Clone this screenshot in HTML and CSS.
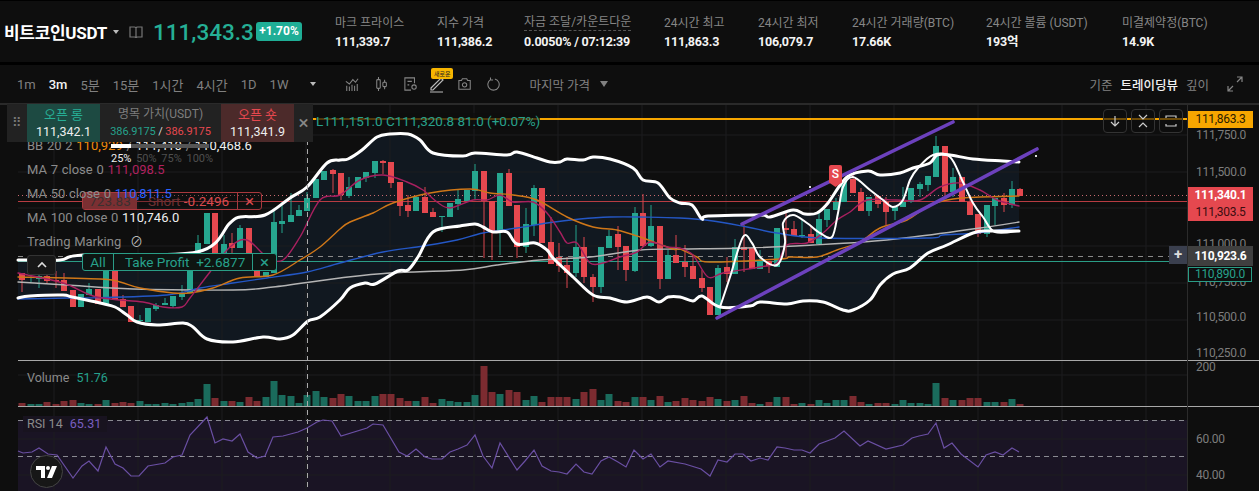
FILE: index.html
```html
<!DOCTYPE html>
<html lang="ko">
<head>
<meta charset="utf-8">
<title>비트코인USDT</title>
<link rel="stylesheet" href="styles.css">
</head>
<body>
<header class="topbar">
  <div class="symbol">
    <span class="symbol-name">비트코인USDT</span>
    <span class="caret"></span>
    <svg class="book" width="14" height="14" viewBox="0 0 14 14"><path d="M1 2h4.500c.8 0 1.500.4 1.500 1 0-.6.7-1 1.500-1H13v10H8.500c-.8 0-1.500.4-1.500 1 0-.6-.7-1-1.500-1H1zM7 3v10" fill="none" stroke="#777" stroke-width="1.200"/></svg>
    <span class="last-price">111,343.3</span>
    <span class="change">+1.70%</span>
  </div>
  <div class="stats">
    <div class="stat"><span class="stat-label">마크 프라이스</span><b class="stat-value">111,339.7</b></div>
    <div class="stat"><span class="stat-label">지수 가격</span><b class="stat-value">111,386.2</b></div>
    <div class="stat"><span class="stat-label stat-dashed">자금 조달/카운트다운</span><b class="stat-value">0.0050% / 07:12:39</b></div>
    <div class="stat"><span class="stat-label">24시간 최고</span><b class="stat-value">111,863.3</b></div>
    <div class="stat"><span class="stat-label">24시간 최저</span><b class="stat-value">106,079.7</b></div>
    <div class="stat"><span class="stat-label">24시간 거래량(BTC)</span><b class="stat-value">17.66K</b></div>
    <div class="stat"><span class="stat-label">24시간 볼륨 (USDT)</span><b class="stat-value">193억</b></div>
    <div class="stat"><span class="stat-label">미결제약정(BTC)</span><b class="stat-value">14.9K</b></div>
  </div>
</header>

<nav class="toolbar">
  <div class="intervals">
    <span>1m</span><span class="active">3m</span><span>5분</span><span>15분</span><span>1시간</span><span>4시간</span><span>1D</span><span>1W</span>
    <span class="caret caret-dim"></span>
  </div>
  <div class="tools">
    <svg width="16" height="18" viewBox="0 0 16 18" fill="none" stroke="#858585" stroke-width="1.200"><path d="M1 6l4 3 4-5 3 3 3-4"/><path d="M2 17v-6M5 17v-5M8 17v-7M11 17v-6M14 17V9"/></svg>
    <svg width="15" height="18" viewBox="0 0 15 18" fill="none" stroke="#858585" stroke-width="1.200"><path d="M4 1v3M4 14v3M11 4v3M11 12v3"/><rect x="2" y="4" width="4" height="10" rx="1"/><rect x="9" y="7" width="4" height="5" rx="1"/></svg>
    <svg width="15" height="18" viewBox="0 0 15 18" fill="none" stroke="#858585" stroke-width="1.200"><path d="M12 8V2H1v14h7"/><path d="M4 6h5M4 10h2"/><circle cx="11.500" cy="12.500" r="2.500"/></svg>
    <span class="draw-tool">
      <span class="new-badge">새로운</span>
      <svg width="16" height="18" viewBox="0 0 16 18" fill="none" stroke="#bbb" stroke-width="1.200"><path d="M2 13L12 3l2 2L4 15H2zM1 17h13"/></svg>
    </span>
    <svg width="15" height="16" viewBox="0 0 15 16" fill="none" stroke="#858585" stroke-width="1.200"><path d="M1 4h3l1-2h5l1 2h3v10H1z"/><circle cx="7.500" cy="9" r="2.500"/></svg>
    <svg width="15" height="16" viewBox="0 0 15 16" fill="none" stroke="#858585" stroke-width="1.200"><path d="M4 3a6.500 6.500 0 1 0 5-.8M4 .5V3.500h3"/></svg>
    <span class="price-type">마지막 가격</span><span class="caret caret-big"></span>
  </div>
  <div class="views">
    <span>기준</span><span class="active">트레이딩뷰</span><span>깊이</span>
    <svg width="16" height="16" viewBox="0 0 16 16" fill="none" stroke="#858585" stroke-width="1.200"><path d="M10 1h5v5M15 1l-5 5M1 10v5h5M1 15l5-5"/></svg>
  </div>
</nav>

<main class="chart">
  <svg id="plot" class="plot" width="1259" height="387" viewBox="0 104 1259 387"></svg>

  <div class="tag tag-short">
    <span class="tag-size">723.83</span><span class="tag-text"><i>Short</i> -0.2496</span><span class="tag-x">×</span>
  </div>
  <div class="tag tag-profit">
    <span class="tag-all">All</span><span class="tag-text">Take Profit &nbsp;+2.6877</span><span class="tag-x">×</span>
  </div>

  <div class="legend">
    <div class="legend-row">BB 20 2 <span class="c-orange">110,929</span> / <span class="c-white">111,410</span> / <span class="c-white">110,468.6</span></div>
    <div class="legend-row">MA 7 close 0 <span class="c-pink">111,098.5</span></div>
    <div class="legend-row">MA 50 close 0 <span class="c-blue">110,811.5</span></div>
    <div class="legend-row">MA 100 close 0 <span class="c-white">110,746.0</span></div>
    <div class="legend-row">Trading Marking <span class="no-sign">⊘</span></div>
  </div>

  <div class="order-panel">
    <span class="grip">⠿</span>
    <div class="order-side side-long"><span class="side-title">오픈 롱</span><span>111,342.1</span></div>
    <div class="order-mid"><span class="mid-title">명목 가치(USDT)</span><span class="mid-values"><i class="c-green">386.9175</i> / <i class="c-red">386.9175</i></span></div>
    <div class="order-side side-short"><span class="side-title">오픈 숏</span><span>111,341.9</span></div>
    <span class="panel-close">×</span>
  </div>
  <div class="qty-slider"><span class="qty-track"><span class="qty-fill"></span></span>
    <span class="qty-labels"><b>25%</b> 50% 75% 100%</span></div>
  <div class="ohlc">L111,151.0 C111,320.8 81.0 (+0.07%)</div>

  <div class="collapse-btn"><svg width="12" height="8" viewBox="0 0 12 8" fill="none" stroke="#ddd" stroke-width="1.600"><path d="M2 6l4-4 4 4"/></svg></div>

  <div class="chart-tools">
    <span class="chart-tool"><svg width="12" height="14" viewBox="0 0 12 14" fill="none" stroke="#ccc" stroke-width="1.200"><path d="M6 2v10M2 8l4 4 4-4"/></svg></span>
    <span class="chart-tool"><svg width="12" height="14" viewBox="0 0 12 14" fill="none" stroke="#ccc" stroke-width="1.200"><path d="M2 1l4 4 4-4M2 13l4-4 4 4"/></svg></span>
    <span class="chart-tool"><svg width="12" height="14" viewBox="0 0 12 14" fill="none" stroke="#ccc" stroke-width="1.200"><path d="M1 4V2h10v2M1 10v2h10v-2"/></svg></span>
  </div>

  <div class="s-flag">S</div>

  <div class="axis-tag tag-high">111,863.3</div>
  <div class="axis-tag tag-red"><b>111,340.1</b><span>111,303.5</span></div>
  <div class="axis-tag tag-cross"><b>110,923.6</b></div>
  <div class="cross-plus">+</div>
  <div class="axis-tag tag-green">110,890.0</div>

  <div class="pane-label pane-volume">Volume <span class="c-green pane-value">51.76</span></div>
  <div class="pane-label pane-rsi">RSI 14 <span class="c-purple pane-value">65.31</span></div>

  <div class="tv-logo"><svg width="22" height="12" viewBox="0 0 22 12" fill="#fff"><path d="M0 0h9v12H5V4H0z"/><circle cx="12" cy="2" r="2"/><path d="M16 0h5l-5 12h-5z"/></svg></div>
</main>
<script src="chart.js"></script>
</body>
</html>
```
FILE: styles.css
```css
* { box-sizing: border-box; }
html, body { margin: 0; height: 491px; overflow: hidden; }
body {
  background: #000;
  color: #e8e8e8;
  font-family: Roboto, "Noto Sans CJK KR", sans-serif;
}
i { font-style: normal; }

.topbar {
  height: 61px;
  margin-top: 1px;
  margin-bottom: 3px;
  background: #0e0e0e;
  display: flex;
  align-items: center;
  padding-left: 4px;
}
.symbol { width: 331px; display: flex; align-items: center; }
.symbol-name { font-size: 17px; font-weight: 700; color: #fff; letter-spacing: -0.3px; width: 109px; }
.caret {
  display: inline-block;
  border-left: 3.5px solid transparent;
  border-right: 3.5px solid transparent;
  border-top: 4px solid #bbb;
}
.book { margin-left: 10px; }
.last-price { margin-left: 10px; font-size: 22.500px; font-weight: 500; color: #25b096; width: 103px; white-space: nowrap; }
.change {
  background: #1fae96;
  color: #fff;
  border-radius: 3px;
  font-size: 12px;
  font-weight: 700;
  height: 19px;
  line-height: 19px;
  width: 46px;
  text-align: center;
}
.stats {
  display: grid;
  grid-template-columns: 102px 87px 140px 94px 94px 134px 136px auto;
}
.stat { display: flex; flex-direction: column; gap: 3px; }
.stat-label { font-size: 12px; line-height: 16px; color: #868686; white-space: nowrap; }
.stat-dashed { border-bottom: 1px dashed #555; line-height: 15px; align-self: flex-start; }
.stat-value { font-size: 12.500px; letter-spacing: -0.2px; line-height: 15px; font-weight: 700; color: #f4f4f4; white-space: nowrap; }

.toolbar {
  height: 39px;
  background: #0e0e0e;
  border-bottom: 1px solid #2a2a2a;
  display: flex;
  align-items: center;
  padding-left: 17px;
  font-size: 13px;
  color: #808080;
}
.intervals { display: flex; align-items: center; gap: 13px; width: 328px; }
.active { color: #f2f2f2; font-weight: 500; }
.caret-dim { margin-left: 9px; }
.tools { display: flex; align-items: center; gap: 16px; width: 263px; }
.draw-tool { position: relative; display: flex; margin: 0 -3px 0 -4px; }
.new-badge {
  position: absolute;
  left: 2px;
  top: -7px;
  width: 22px;
  height: 11px;
  background: #f7b500;
  color: #222;
  border-radius: 2px;
  font-size: 6px;
  line-height: 11px;
  text-align: center;
}
.price-type { margin-left: 13px; white-space: nowrap; font-size: 12.500px; }
.caret-big { margin-left: -6px; border-left-width: 4.500px; border-right-width: 4.500px; border-top-width: 6px; border-top-color: #808080; }
.views { margin-left: auto; display: flex; align-items: center; gap: 8px; padding-right: 16px; font-size: 12.500px; }
.views svg { margin-left: 10px; }

.chart { position: relative; height: 387px; background: #0e0e0e; overflow: hidden; font-size: 13px; color: #858585; }
.plot { position: absolute; inset: 0; display: block; }
.plot text { font-family: Roboto, sans-serif; font-size: 12px; letter-spacing: -0.3px; fill: #7d7d7d; }

.legend { position: absolute; left: 27px; top: 32px; display: flex; flex-direction: column; gap: 5px; white-space: nowrap; word-spacing: 0.5px; }
.legend-row { height: 19px; line-height: 19px; font-size: 13px; color: #8b8b8b; }
.c-orange { color: #f08a0d; }
.c-white { color: #eee; }
.c-pink { color: #b0225f; }
.c-blue { color: #2962ff; }
.c-green { color: #25a18c; }
.c-red { color: #e5484f; }
.c-purple { color: #7a5fc0; }
.no-sign { color: #bbb; margin-left: 5px; }

.order-panel {
  position: absolute;
  left: 7px;
  top: 0;
  width: 306px;
  height: 38px;
  background: #222;
  display: flex;
  font-size: 12.500px;
}
.grip { width: 20px; text-align: center; color: #777; line-height: 38px; font-size: 13px; }
.order-side { width: 73px; display: flex; flex-direction: column; align-items: center; justify-content: center; color: #eee; line-height: 15px; }
.side-long { background: #1d4a42; }
.side-short { background: #4c2a2a; }
.side-long .side-title { color: #27ad95; }
.side-short .side-title { color: #e5484f; }
.side-title { font-size: 13px; margin-bottom: 2px; }
.order-mid { width: 121px; display: flex; flex-direction: column; align-items: center; justify-content: center; line-height: 15px; }
.mid-title { color: #7d7d7d; margin-bottom: 2px; font-size: 12px; }
.mid-values { font-size: 11px; letter-spacing: -0.1px; color: #ddd; }
.panel-close { width: 19px; text-align: center; font-size: 19px; line-height: 38px; color: #888; }

.qty-slider { position: absolute; left: 111px; top: 40px; width: 100px; }
.qty-track { display: block; height: 4px; background: #555; width: 98px; }
.qty-fill { display: block; height: 4px; width: 20px; background: #fff; }
.qty-labels { display: block; margin-top: 4px; font-size: 11px; color: #4e4e4e; white-space: nowrap; word-spacing: 2px; }
.qty-labels b { font-weight: 400; color: #eee; }

.ohlc { position: absolute; left: 316px; top: 9px; font-size: 13.500px; line-height: 16px; color: #27a18c; background: rgba(14,14,14,.72); white-space: nowrap; }

.tag { position: absolute; display: flex; height: 18px; line-height: 16px; border: 1px solid; border-radius: 3px; font-size: 13.500px; white-space: nowrap; }
.tag-short { left: 82px; top: 88px; width: 180px; border-color: #a8383d; color: #d94a4f; background: rgba(14,14,14,.35); }
.tag-size { width: 54px; background: #7b2f32; color: #3a3030; text-align: center; }
.tag-short .tag-text { width: 101px; padding-left: 11px; border-right: 1px solid #a8383d; }
.tag-short .tag-text i { color: #6e3133; }
.tag-x { flex: 1; text-align: center; font-size: 17px; }
.tag-profit { left: 82px; top: 149px; width: 195px; border-color: #2a9d86; color: #27a18c; background: #0e1512; }
.tag-all { width: 31px; text-align: center; border-right: 1px solid #2a9d86; }
.tag-profit .tag-text { width: 139px; padding-left: 11px; border-right: 1px solid #2a9d86; }

.collapse-btn { position: absolute; left: 27px; top: 151px; width: 29px; height: 20px; background: #171717; border: 1px solid #333; border-radius: 3px; display: flex; align-items: center; justify-content: center; }

.chart-tools { position: absolute; left: 1103px; top: 5px; display: flex; gap: 4px; }
.chart-tool { width: 24px; height: 24px; border: 1px solid #333; border-radius: 4px; background: rgba(14,14,14,.6); display: flex; align-items: center; justify-content: center; }

.s-flag { position: absolute; left: 829px; top: 61px; width: 13px; height: 22px; background: #e5484f; color: #fff; font-size: 12px; font-weight: 500; line-height: 18px; text-align: center; clip-path: polygon(0 0, 100% 0, 100% 80%, 50% 100%, 0 80%); border-radius: 2px 2px 0 0; }

.axis-tag { position: absolute; left: 1188px; width: 65px; font-size: 12px; letter-spacing: -0.3px; text-align: center; }
.tag-high { top: 7px; height: 17px; line-height: 17px; background: #f7a600; color: #2a1c00; }
.tag-red { top: 83px; height: 34px; background: #e5484f; color: #3b0d10; line-height: 17px; display: flex; flex-direction: column; }
.tag-red b { color: #fff; }
.tag-cross { top: 142px; height: 20px; line-height: 20px; background: #3f3f3f; color: #fff; }
.cross-plus { position: absolute; left: 1169px; top: 142px; width: 18px; height: 18px; background: #3a3f4e; color: #ddd; text-align: center; line-height: 17px; font-size: 15px; font-weight: 700; }
.tag-green { top: 163px; height: 15px; line-height: 13px; background: #0e0e0e; border: 1px solid #2a9d86; color: #27a18c; width: 64px; }

.pane-label { position: absolute; left: 27px; font-size: 12.500px; line-height: 16px; color: #8b8b8b; white-space: nowrap; }
.pane-value { margin-left: 4px; }
.pane-volume { top: 266px; }
.pane-rsi { top: 312px; left: 23px; padding: 0 6px 0 4px; background: #18131f; }

.tv-logo { position: absolute; left: 30px; top: 351px; width: 33px; height: 33px; border-radius: 50%; background: #171717; border: 1px solid #444; display: flex; align-items: center; justify-content: center; }
```
FILE: chart.js
```js
// Price chart data, in screen pixels of the plot.
var NS = 'http://www.w3.org/2000/svg';
var plot = document.getElementById('plot');
var AXIS = 1187, LEFT = 18;

function el(name, attrs, text) {
  var n = document.createElementNS(NS, name);
  for (var k in attrs) n.setAttribute(k, attrs[k]);
  if (text) n.textContent = text;
  plot.appendChild(n);
  return n;
}
// Catmull-Rom curve through the points, as TradingView's smoothed lines look.
function curve(str) {
  var p = str.split(' ').map(function (s) { return s.split(',').map(Number); });
  var d = 'M' + p[0][0] + ' ' + p[0][1];
  for (var i = 0; i < p.length - 1; i++) {
    var a = p[Math.max(i - 1, 0)], b = p[i], c = p[i + 1], e = p[Math.min(i + 2, p.length - 1)];
    d += 'C' + (b[0] + (c[0] - a[0]) / 6).toFixed(1) + ' ' + (b[1] + (c[1] - a[1]) / 6).toFixed(1) + ' ' +
         (c[0] - (e[0] - b[0]) / 6).toFixed(1) + ' ' + (c[1] - (e[1] - b[1]) / 6).toFixed(1) + ' ' + c[0] + ' ' + c[1];
  }
  return d;
}
function line(pts, color, width) {
  return el('path', { d: curve(pts), fill: 'none', stroke: color, 'stroke-width': width, 'stroke-linejoin': 'round', 'stroke-linecap': 'round' });
}

// [colour, body top, body bottom, wick top, wick bottom, volume]
var C = [
['r',273,280,273,292,3],['g',277,278,272,282,2],['g',276,279,273,288,2],['r',276,281,273,283,4],['r',280,281,271,288,2],
['r',280,291,273,291,5],['r',290,307,290,307,6],['g',294,307,294,307,3],['g',289,295,283,295,2],['r',289,304,289,304,2],
['g',270,304,270,304,6],['r',270,300,270,300,3],['r',299,307,295,307,4],['r',306,322,306,322,3],['g',320,321,315,322,5],
['g',308,322,308,322,2],['g',305,309,303,311,2],['g',303,305,298,305,3],['g',296,306,296,308,2],['g',293,297,285,300,3],
['g',265,293,265,293,4],['g',243,262,235,262,7],['g',213,244,213,244,22],['r',213,265,213,265,8],['g',244,260,235,260,5],
['r',243,248,233,257,5],['g',228,248,225,248,4],['r',228,255,228,255,9],['r',255,276,255,276,5],['g',272,277,272,277,9],
['g',222,273,210,273,25],['g',221,224,202,233,11],['g',215,222,193,222,10],['g',210,216,205,216,3],['g',198,211,192,211,11],
['g',179,198,179,198,15],['g',171,180,171,180,9],['r',170,174,169,193,8],['r',173,195,173,200,12],['g',187,196,177,198,10],
['g',177,188,177,188,5],['g',172,178,172,182,5],['g',161,173,161,178,10],['r',161,163,160,174,12],['r',162,183,162,188,12],
['r',182,206,182,216,8],['r',205,211,195,217,5],['g',197,211,196,211,5],['r',197,213,187,213,9],['r',212,217,208,217,3],
['g',216,217,216,232,7],['g',203,217,203,217,5],['g',199,204,190,210,4],['g',190,201,190,201,4],['g',171,191,164,200,11],
['r',171,201,171,258,40],['r',201,231,201,260,14],['g',173,231,173,255,12],['r',173,206,169,206,16],['r',205,247,205,258,14],
['g',224,247,208,253,6],['g',188,225,185,236,10],['r',188,243,188,243,4],['r',242,264,217,264,9],['r',257,266,243,272,9],
['r',265,273,257,288,9],['g',247,273,225,277,7],['r',247,277,237,283,14],['r',277,287,274,302,17],['g',247,287,247,293,6],
['g',236,248,230,248,12],['r',234,247,226,270,5],['r',246,270,246,281,4],['g',213,271,207,272,9],['r',213,246,194,247,9],
['g',226,246,205,247,6],['r',226,279,226,289,10],['g',255,279,250,279,4],['r',255,263,235,263,5],['r',262,267,245,277,8],
['r',266,279,255,279,6],['r',278,288,270,292,5],['r',287,315,287,315,9],['g',268,315,265,315,7],['r',267,274,257,282,5],
['g',247,274,239,274,6],['r',247,250,225,272,10],['r',248,269,248,269,3],['g',260,269,250,269,2],['r',261,266,261,273,4],
['g',228,267,228,267,9],['r',228,230,211,257,9],['r',229,236,221,236,2],['g',235,236,219,238,3],['r',234,243,226,243,2],
['g',219,244,212,244,6],['g',209,220,209,227,3],['g',202,210,198,210,6],['g',180,202,180,202,6],['r',179,193,175,193,10],
['r',192,211,188,211,4],['g',197,211,197,216,2],['r',196,204,196,208,3],['r',202,212,197,225,3],['g',207,211,207,220,2],
['g',202,207,187,207,6],['g',188,202,188,203,3],['g',184,189,182,197,3],['g',176,185,176,191,2],['g',146,177,136,177,23],
['r',146,192,146,197,8],['g',177,192,168,197,6],['r',177,202,177,202,6],['r',202,215,198,215,8],['r',214,234,214,237,8],
['g',205,234,205,237,4],['g',198,206,198,225,4],['r',198,205,193,212,4],['g',189,205,181,208,7],['r',189,196,188,196,2]
];

var upper = '18,260 60,260 83,255 197,252 230,223 240,217 265,215 290,198 307,187 327,163 340,160 348,159 362,150 377,137 390,134 408,134 420,140 433,153 463,156 475,153 507,155 517,152 537,158 550,162 560,162 567,159 583,160 593,157 610,159 633,168 643,180 658,183 670,198 680,203 692,205 702,219 708,216 760,215 770,217 793,210 805,214 817,213 828,203 847,177 868,171 880,175 900,173 913,168 930,163 937,155 950,155 973,159 1003,161 1019,162';
var lower = '18,298 30,296 63,295 72,297 100,303 115,307 127,315 137,322 157,325 183,323 193,327 207,339 233,342 263,337 280,339 293,335 308,321 320,317 340,300 350,288 365,283 375,284 398,271 408,270 418,257 433,232 460,226 475,224 483,227 493,232 507,232 517,244 535,243 547,250 553,258 573,277 593,295 610,298 627,302 647,297 659,302 668,297 680,297 693,301 702,296 720,307 750,306 760,302 787,304 803,301 823,302 843,310 853,310 870,300 880,285 893,274 910,268 928,253 947,245 973,233 987,231 1019,231';
var inner = '720,307 730,277 743,237 752,243 760,257 777,265 785,243 783,223 793,215 807,223 820,233 832,237 838,213 843,187 853,177 870,190 883,200 893,207 903,200 910,180 918,168 933,155 950,157 962,180 973,203 983,217 995,232 1019,231';

var pink = '18,273 63,283 97,297 143,302 163,307 182,307 190,298 210,272 230,247 247,240 267,257 283,260 300,237 320,200 340,195 360,180 383,175 407,182 423,190 437,202 450,208 473,200 487,200 500,195 513,202 533,202 547,213 560,232 567,243 577,243 590,263 603,263 620,257 637,252 650,242 667,247 680,248 693,255 708,277 723,273 760,267 777,263 787,245 807,243 823,233 837,220 850,212 867,200 897,200 920,200 940,187 960,183 980,190 997,200 1019,206';
var orange = '18,277 100,279 120,282 140,288 173,293 190,293 213,288 240,278 273,275 300,260 320,247 340,229 350,222 373,213 393,203 430,193 470,189 490,193 513,195 537,200 567,217 593,227 617,230 640,237 673,249 680,249 697,257 710,262 780,259 790,257 817,257 837,250 860,242 880,228 907,220 930,205 953,199 980,197 1019,196';
var blue = '18,299 67,298 87,298 167,295 200,288 233,283 267,278 307,272 340,263 383,252 423,246 457,240 483,233 517,228 547,223 580,219 610,217 640,217 680,218 713,221 747,227 777,233 820,238 927,238 943,235 977,233 1019,227';
var gray = '18,282 67,285 133,289 233,290 273,287 340,278 390,273 463,270 497,265 540,260 590,257 640,250 680,249 747,248 813,245 863,242 913,237 980,228 1019,222';

var rsi = '18,451 23,453 32,452 39,448 48,454 57,455 73,478 82,466 89,461 98,471 106,447 115,464 123,468 131,476 139,476 148,466 165,463 173,457 182,455 190,435 207,417 215,443 223,439 232,441 240,434 248,452 257,458 265,456 273,437 283,436 298,432 307,428 317,422 323,420 332,421 341,436 367,428 373,424 383,425 399,452 407,456 416,449 425,457 432,459 442,459 450,452 458,449 467,445 475,435 483,456 492,468 500,443 517,470 525,461 534,450 542,466 551,471 559,472 567,474 576,464 584,472 592,474 601,461 609,457 618,462 626,467 634,450 643,459 651,454 660,467 668,461 685,464 701,469 710,476 718,460 727,462 735,454 743,454 751,461 760,458 768,460 777,447 785,448 794,450 802,450 810,453 819,444 827,441 835,438 844,431 860,446 868,441 886,449 903,445 912,438 919,436 928,434 936,423 944,448 952,443 961,454 978,467 986,455 995,452 1003,455 1012,448 1019,452';

// Panes and grid
el('rect', { x: LEFT, y: 420, width: AXIS - LEFT, height: 71, fill: '#1a1424' });
var lowerBack = lower.split(' ').reverse().join(' L');
el('path', { d: 'M' + upper.split(' ').join(' L') + ' L' + lowerBack + 'Z', fill: '#111820' });
var grid = '';
for (var gx = 54; gx < AXIS; gx += 84) grid += 'M' + gx + ' 104V491';
[135, 172, 208, 246, 283, 320, 375, 439, 475].forEach(function (y) { grid += 'M' + LEFT + ' ' + y + 'H' + AXIS; });
el('path', { d: grid, stroke: '#1c1c1f', 'stroke-width': 1, fill: 'none' });

// Price lines under the candles
el('path', { d: 'M18 195.500H1187', stroke: '#c86a70', 'stroke-width': 1, 'stroke-dasharray': '1 3' });
el('path', { d: 'M18 201.500H1187', stroke: '#b83c42', 'stroke-width': 1 });
el('path', { d: 'M18 256.500H1187', stroke: '#8a8a8a', 'stroke-width': 1, 'stroke-dasharray': '5 5' });
el('path', { d: 'M18 261.500H1187', stroke: '#2a9d86', 'stroke-width': 1 });

// Volume, wicks and bodies
C.forEach(function (c, i) {
  var x = Math.round(22.3 + 8.387 * i);
  var green = c[0] === 'g';
  el('rect', { x: x - 3.5, y: 406 - c[5], width: 7, height: c[5], fill: green ? '#1a6b5c' : '#7c2b30' });
  el('rect', { x: x - 0.5, y: c[3], width: 1, height: c[4] - c[3], fill: green ? '#25a18c' : '#d9474e' });
  el('rect', { x: x - 3, y: c[1], width: 6, height: Math.max(c[2] - c[1], 1), fill: green ? '#26a68f' : '#e5484f' });
});

line(gray, '#b4b4b4', 1.4);
line(blue, '#2457c5', 1.4);
line(orange, '#cf7718', 1.4);
line(pink, '#a8205f', 1.4);
line(upper, '#fff', 3);
line(lower, '#fff', 3);
line(inner, '#fff', 2);

el('path', { d: 'M742 224L953 122M717 318L1037 149', stroke: '#6c41bd', 'stroke-width': 3.6, 'stroke-linecap': 'round' });
el('rect', { x: 809, y: 186, width: 2, height: 2, fill: '#ddd' });
el('rect', { x: 1035, y: 155, width: 2, height: 2, fill: '#ddd' });

// Crosshair, high line, pane borders
el('path', { d: 'M307.500 104V491', stroke: '#aaa', 'stroke-width': 1, 'stroke-dasharray': '5 4' });
el('path', { d: 'M18 119H1187', stroke: '#f7a600', 'stroke-width': 2 });
el('path', { d: 'M18 360.500H1259M18 406.500H1259', stroke: '#a8a8a8', 'stroke-width': 1 });
el('path', { d: 'M18 420.500H1187M18 456.500H1187', stroke: '#8a8a92', 'stroke-width': 1, 'stroke-dasharray': '5 4' });
el('path', { d: 'M1187.500 104V491', stroke: '#2b2b2b', 'stroke-width': 1 });
el('path', { d: 'M0 104.500H1259', stroke: '#2a2a2a', 'stroke-width': 1 });

// RSI
el('polyline', { points: rsi, fill: 'none', stroke: '#6a4fa3', 'stroke-width': 1.2 });

// Axis ticks
[['111,750.0', 139], ['111,500.0', 176], ['111,000.0', 248], ['110,750.0', 286], ['110,500.0', 321], ['110,250.0', 357], ['200', 371], ['60.00', 443], ['40.00', 479]]
  .forEach(function (t) { el('text', { x: 1196, y: t[1] }, t[0]); });
```
